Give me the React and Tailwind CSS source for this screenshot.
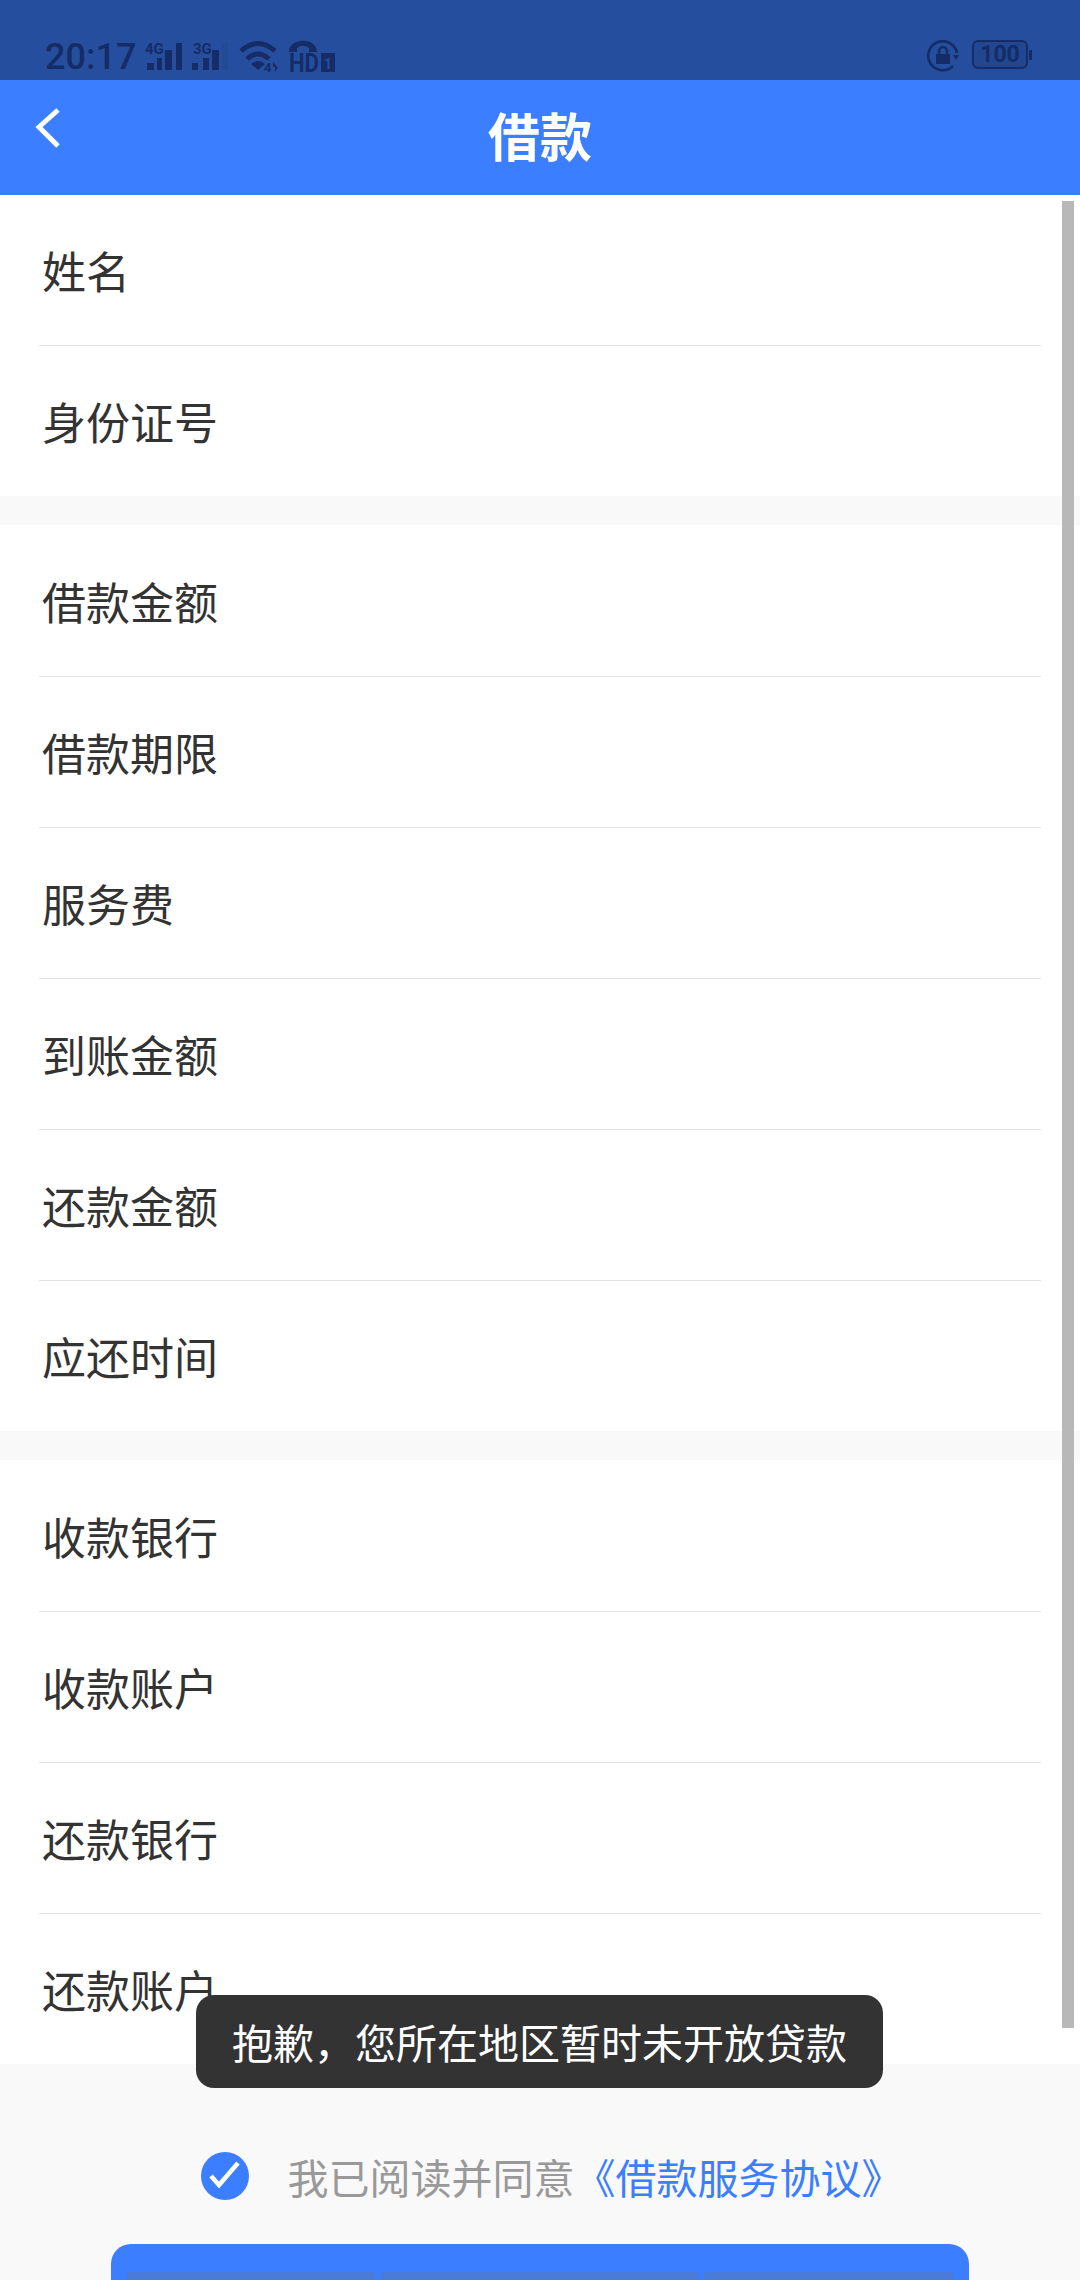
import React from "react";

const cjk = "font-['Noto_Sans_CJK_SC','Noto_Sans',sans-serif]";

function Row({ label, height, line }) {
  return (
    <div className={`mx-[39px] flex items-center ${height} ${line ? "border-b border-[#e2e2e2]" : ""}`}>
      <span className="ml-[3px] text-[44px] leading-none text-[#333333]">{label}</span>
    </div>
  );
}

// the first row of a long group is 1px taller in the source, the last one has no line
function Group({ items, firstHeight }) {
  return (
    <div className="bg-white">
      {items.map((label, i) => {
        const last = i === items.length - 1;
        const height = i === 0 ? firstHeight : last ? "h-[150px]" : "h-[151px]";
        return <Row key={label} label={label} height={height} line={!last} />;
      })}
    </div>
  );
}

function Signal({ tag, tagX, bars, className }) {
  return (
    <svg width="40" height="32" viewBox="0 0 40 32" className={`overflow-visible ${className || ""}`}>
      <text x={tagX} y="14" fontSize="15" fontWeight="700" fontFamily="Roboto" fill="currentColor">{tag}</text>
      {bars.map((b) => (
        <rect key={b[0]} x={b[0]} y={b[1]} width={b[2]} height={30 - b[1]} fill="currentColor" opacity={b[3] || 1} />
      ))}
    </svg>
  );
}

function StatusBar() {
  return (
    <div className="h-[80px] bg-[#254f9e] flex items-start justify-between pl-[45px] pr-[48px] pt-[40px] text-[#152c66]">
      <div className="flex items-start">
        <span className="w-[100px] -mt-[1px] font-['Roboto'] text-[36px] leading-[36px] font-medium">20:17</span>
        <Signal tag="4G" tagX="0" bars={[[2, 23, 7], [12, 18, 5], [20, 10, 7], [31, 3, 6]]} />
        <Signal tag="3G" tagX="3" className="ml-[5px]" bars={[[2, 23, 6], [13, 18, 6], [22, 10, 7], [32, 3, 6, 0.15]]} />
        <svg width="42" height="32" viewBox="0 0 42 32" className="ml-[8px] overflow-visible">
          <path d="M3 11Q20 -4 37 11" fill="none" stroke="currentColor" strokeWidth="5" />
          <path d="M9 19Q20 9 31 19" fill="none" stroke="currentColor" strokeWidth="5" />
          <path d="M13 24Q20 18 27 24L20 30Z" fill="currentColor" />
          <text x="26" y="32" fontSize="13" fontWeight="700" fontFamily="Roboto" fill="currentColor">4</text>
          <path d="M35 22l4 5h-4zM37 27h3l-3 5z" fill="currentColor" />
        </svg>
        <svg width="47" height="32" viewBox="0 0 47 32" className="ml-[9px] overflow-visible">
          <path d="M0 12C0 -3 28 -3 28 12H20V8C16 5 12 5 8 8V12Z" fill="currentColor" />
          <text x="0" y="32" fontSize="25" fontWeight="700" fontFamily="Roboto" fill="currentColor" textLength="30" lengthAdjust="spacingAndGlyphs">HD</text>
          <rect x="32" y="13" width="14" height="19" fill="currentColor" />
          <text x="35" y="29" fontSize="14" fontWeight="700" fontFamily="Roboto" fill="#254f9e">1</text>
        </svg>
      </div>
      <div className="flex items-start gap-[13px]">
        <svg width="32" height="32" viewBox="0 0 32 32">
          <path d="M26 26A14.500 14.500 0 1 1 30 13" fill="none" stroke="currentColor" strokeWidth="2.600" />
          <path d="M26 15h6l-3 5z" fill="currentColor" />
          <rect x="9" y="14" width="14" height="10" fill="currentColor" />
          <path d="M12 14v-3a4 4 0 0 1 8 0v3" fill="none" stroke="currentColor" strokeWidth="2.600" />
        </svg>
        <div className="flex items-center">
          <div className="w-[56px] h-[29px] rounded-[6px] border-2 border-current bg-[#20478f] flex items-center justify-center">
            <span className="font-['Roboto'] font-bold text-[23px] leading-none">100</span>
          </div>
          <div className="w-[3px] h-[10px] ml-[1px] bg-current" />
        </div>
      </div>
    </div>
  );
}

function Header() {
  return (
    <div className="h-[115px] bg-[#3b7eff] relative flex items-center justify-center">
      <svg width="30" height="44" viewBox="0 0 30 44" className="absolute left-[33px] top-[26px]">
        <path d="M25 4L6 21L25 40" fill="none" stroke="white" strokeWidth="5" />
      </svg>
      <span className="text-[52px] leading-none font-bold text-white -mt-[5px]">借款</span>
    </div>
  );
}

export default function App() {
  return (
    <div className={`relative w-[1080px] h-[2280px] overflow-hidden bg-[#f9f9f9] flex flex-col ${cjk}`}>
      <StatusBar />
      <Header />
      <Group items={["姓名", "身份证号"]} firstHeight="h-[151px]" />
      <div className="h-[29px] shrink-0" />
      <Group items={["借款金额", "借款期限", "服务费", "到账金额", "还款金额", "应还时间"]} firstHeight="h-[152px]" />
      <div className="h-[29px] shrink-0" />
      <Group items={["收款银行", "收款账户", "还款银行", "还款账户"]} firstHeight="h-[152px]" />

      <div className="flex-1 flex flex-col items-center">
        <div className="h-[88px] mt-[68px] flex items-center ml-[23px]">
          <svg width="48" height="48" viewBox="0 0 48 48" className="mr-[39px]">
            <circle cx="24" cy="24" r="24" fill="#3b7eff" />
            <path d="M10 24L18 33L37 11" fill="none" stroke="white" strokeWidth="4.500" />
          </svg>
          <span className="text-[41px] leading-none text-[#999999]">我已阅读并同意</span>
          <span className="text-[41px] leading-none text-[#3b7eff]">《借款服务协议》</span>
        </div>
        <div className="w-[858px] flex-1 mt-[24px] bg-[#3b7eff] rounded-t-[20px] pl-[16px] pr-[16px] pt-[28px]">
          <div className="flex gap-[6px] h-[8px]">
            <div className="w-[248px] bg-[#4a7bd8]" />
            <div className="w-[317px] bg-[#4a7bd8]" />
            <div className="flex-1 bg-[#4a7bd8]" />
          </div>
        </div>
      </div>

      <div className="absolute right-[6px] top-[201px] w-[12px] h-[1827px] bg-[#b8b8b8]" />
      <div className="absolute left-[196px] top-[1995px] w-[687px] h-[93px] rounded-[18px] bg-[#333333] flex items-center justify-center">
        <span className="text-[41px] leading-none text-white">抱歉，您所在地区暂时未开放贷款</span>
      </div>
    </div>
  );
}
